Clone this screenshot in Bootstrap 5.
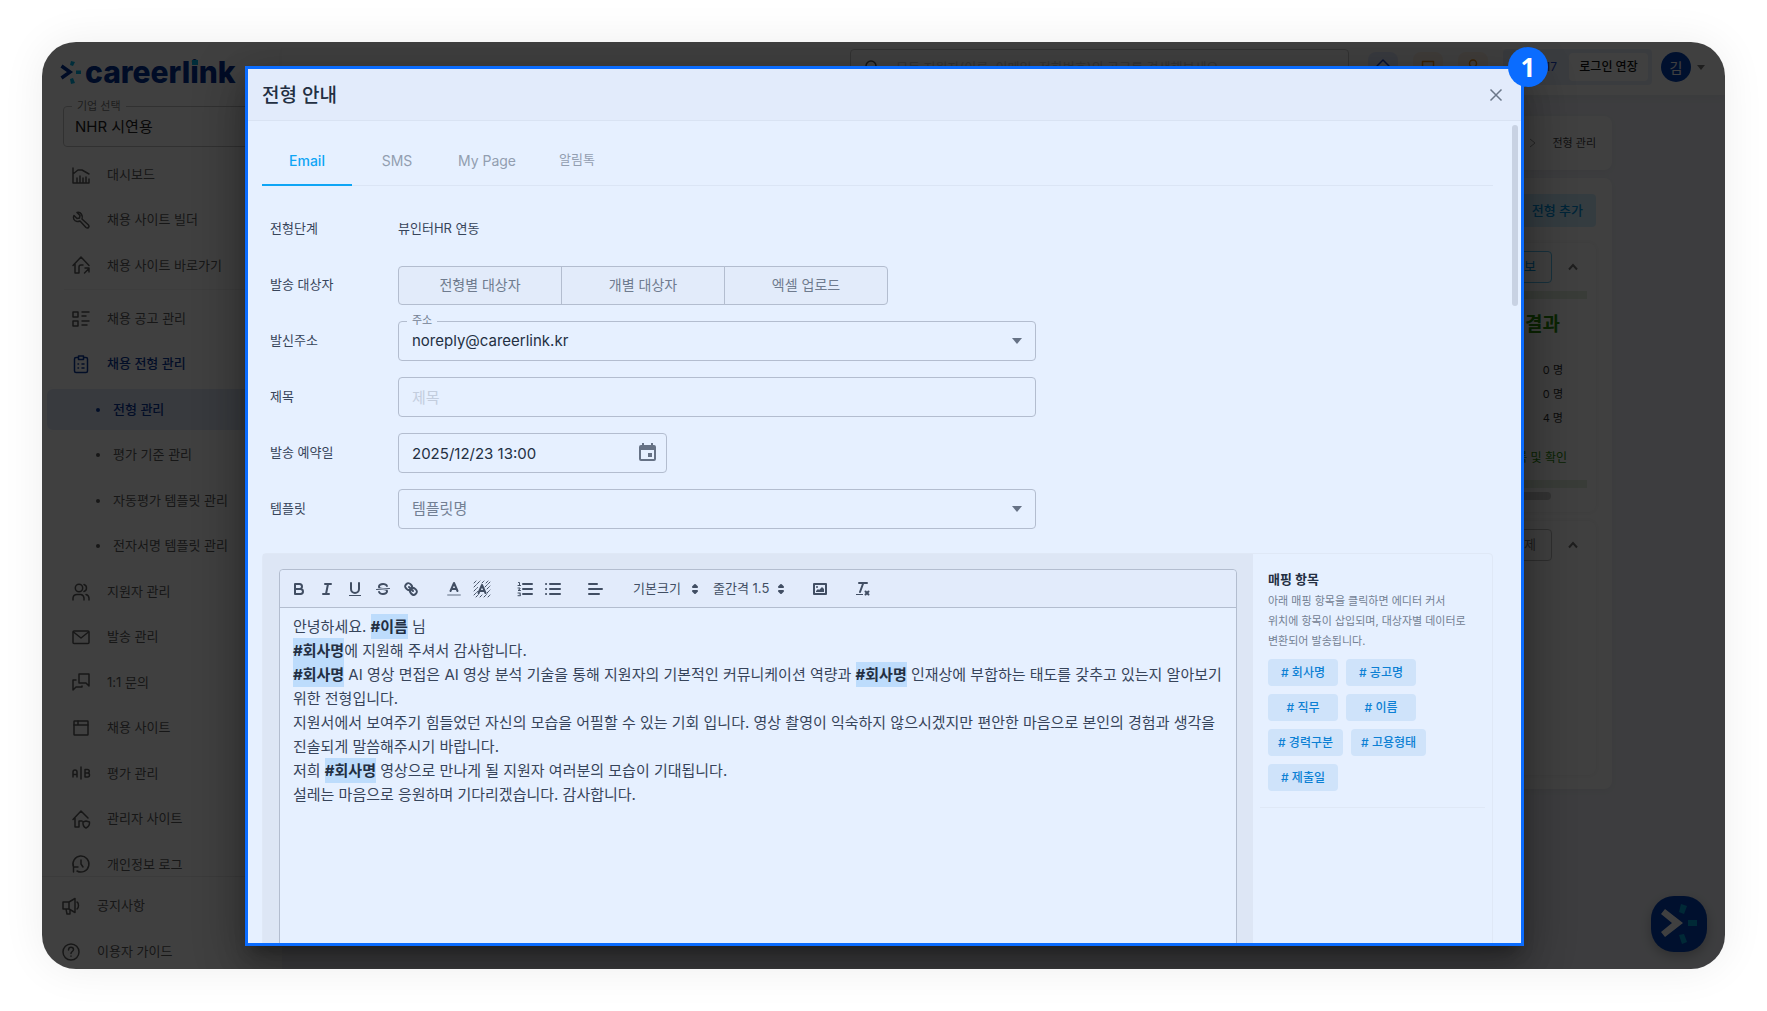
<!DOCTYPE html>
<html lang="ko">
<head>
<meta charset="utf-8">
<meta name="viewport" content="width=device-width, initial-scale=1">
<title>careerlink - 전형 안내</title>
<link rel="stylesheet" href="https://cdn.jsdelivr.net/npm/bootstrap@5.3.0/dist/css/bootstrap.min.css">
<style>
:root{--accent:#0a6cff;--sky:#0ea5f5;--panel:#e6f0ff;--panel-head:#e2ebfb;--edge:#b3bdcf;--ink:#37445a;--ink-dark:#232f42;--ink-soft:#7b8799}
body{font-family:Inter,"Noto Sans CJK KR",sans-serif;font-size:13px;color:var(--ink);background:#fff}
button,input,select{font-family:inherit}
svg{display:block;flex:none}
.page{height:100vh;padding:42px}
.stage{border-radius:34px;overflow:hidden;background:#fff;color:#5c5c5c}
.stage-shadow{border-radius:34px;box-shadow:0 0 44px rgba(0,0,0,.07)}
.ico{width:20px;height:20px;fill:none;stroke:currentColor;stroke-width:1.5;stroke-linecap:round;stroke-linejoin:round}

/* side navigation */
.side{width:240px;background:#fff}
.logo-row{height:58px;padding:2px 0 0 18px}
.wordmark{font-size:30px;font-weight:800;line-height:36px;color:#003296}
.idot{position:relative}
.idot::after{content:"";position:absolute;left:2px;top:6px;width:6px;height:5px;background:#00b4e6}
.company{margin:6px 0 0 21px;height:41px;border:1px solid #c4c4c4;border-radius:4px;padding:1px 11px 0;position:relative;color:#222}
.company select{border:0;background:transparent;width:100%;height:39px;appearance:none;color:#222;padding:0;font-size:15px}
.company label{position:absolute;left:8px;top:-9px;padding:0 5px;background:#fff;font-size:11px;line-height:16px;color:#777}
.side a{display:flex;align-items:center;color:inherit;text-decoration:none;white-space:nowrap}
.top-links{margin-top:5px;height:136px;padding-left:29px}
.mid-links{margin:6px 0 -11px;min-height:0}
.top-links a,.mid-links a{flex:1 1 0}
.mid-links a{padding-left:29px}
.top-links a,.mid-links a{gap:16px}
.mid-links a.sub-link{margin-left:5px;padding-left:49px;gap:13px}
.sub-link::before{content:"";width:4px;height:4px;border-radius:50%;background:currentColor}
.mid-links a.is-active{color:#0b3a9c;font-weight:500}
.mid-links a.is-current{background:#dfe6f8;border-radius:6px 0 0 6px;box-shadow:inset 0 2px #fff,inset 0 -2px #fff}
.foot-links{border-top:1px solid #ececec;padding:6px 0 0 19px;height:93px;position:relative}
.foot-links a{height:46px;gap:16px}
.thin{border-top:1px solid #f2f2f2;margin:1px 0 0 22px}

/* top bar */
.topbar{height:53px;background:#fff;padding:0 20px 3px 0;gap:15px;box-shadow:0 4px 10px rgba(0,0,0,.04);position:relative}
.search{width:499px;height:36px;border:1px solid #ccc;border-radius:4px;gap:15px;padding:0 10px;color:#555}
.search input{border:0;background:transparent;flex:1;font-size:13px;padding:2px 0 0}
.search input::placeholder{color:#ccc}
.tile{width:30px;height:30px;border:0;border-radius:8px;display:flex;align-items:center;justify-content:center;padding:0}
.tile-blue{background:#e4ebff;color:#1d46c8}
.tile-amber{background:#fff2e6;color:#e98a10}
.timer{background:#e8edfb;border-radius:4px;height:36px;padding:0 4px;width:149px;gap:12px;color:#1d46c8;font-size:12px}
.timer button{background:#fff;border:0;border-radius:4px;height:28px;width:79px;font-size:12px;font-weight:500;color:#111;padding:0}
.avatar{width:30px;height:30px;border-radius:50%;background:#0042b8;color:#fff;border:0;padding:0;font-size:14px}
.user{gap:6px;margin-left:-6px}

/* page behind */
.content{background:#f2f4fa;padding:21px 113px 0 12px;color:#444}
.sheet{background:#fff;border-radius:8px;box-shadow:0 2px 8px rgba(0,0,0,.05)}
.crumbs{height:54px;font-size:11px;gap:15px;padding:0 16px 0 0;margin-bottom:8px}
.board{height:611px;padding:16px 16px 14px}
.board .add{height:33px;border:0;border-radius:4px;background:#cfeeff;color:#0093e0;font-size:13px;font-weight:500;padding:0 13px}
.step{border-radius:8px;box-shadow:0 0 6px rgba(0,0,0,.08);padding:8px 9px}
.step-a{height:269px;margin-top:16px}
.step-b{height:254px;margin-top:9px}
.mini{height:32px;border:1px solid #5cc3f2;border-radius:4px;background:#fff;color:#0093e0;padding:0 15px;font-size:13px}
.mini-gray{border-color:#bbb;color:#777}
.step-tools{gap:11px;margin-right:8px;color:#777}
.band{height:8px;background:#e2efdd}
.result{color:#2f8f0c;font-size:19px;font-weight:700;line-height:24px;margin:14px 27px 0 0}
.counts{font-size:11px;line-height:24px;margin:21px 24px 0 0;color:#333}
.bulk{color:#2f8f0c;font-size:12px;line-height:20px;margin:18px 20px 12px 0}
.hbar{height:8px;border-radius:4px;background:#ccc;margin:4px 36px 0 0}

.veil{position:absolute;inset:0;background:rgba(0,0,0,.75);padding:24px 201px 23px 203px;z-index:5}
.fab{position:absolute;right:18px;bottom:17px;width:56px;height:56px;border:0;border-radius:23px;background:#0040b8;padding:0;box-shadow:0 4px 12px rgba(0,0,0,.25)}

/* dialog */
.dialog{position:relative;flex:1;min-width:0;border:3px solid var(--accent);background:var(--panel);color:var(--ink);box-shadow:0 11px 15px -7px rgba(0,0,0,.3),0 24px 38px 3px rgba(0,0,0,.2),0 9px 46px 8px rgba(0,0,0,.16)}
.dialog-head{height:52px;flex:none;background:var(--panel-head);border-bottom:1px solid #d9e3f3;padding:0 18px 0 14px}
.dialog-head h1{font-size:19px;font-weight:500;color:var(--ink-dark);margin:0;padding-top:4px}
.x-btn{border:0;background:none;padding:0;color:#6b7789}
.step-no{position:absolute;right:-27px;top:-22px;width:40px;height:40px;border-radius:50%;background:var(--accent);color:#fff;font:700 26px/40px "Noto Sans",sans-serif;text-align:center;z-index:9}
.dialog-body{position:relative;flex:1;min-height:0;overflow:hidden;padding:16px 28px 0 14px}
.thumb{position:absolute;right:3px;top:4px;width:6px;height:181px;border-radius:3px;background:#c8d2e3}
.tabs{border-bottom:1px solid #dbe5f5}
.tabs button{width:90px;height:49px;margin-bottom:-1px;border:0;border-bottom:2px solid transparent;background:none;font-size:14px;color:#929eb0;padding:0 0 1px}
.tabs button.on{color:var(--sky);border-color:var(--sky);font-weight:500}
.tabs button:lang(ko){font-size:13px}
.rows{padding:23px 8px 0;gap:16px}
.line{height:40px}
.line>label,.line>.cap{width:128px;flex:none}
.trio button{width:164px;height:39px;border:1px solid var(--edge);background:#e2ebfa;color:#6f7b8e;font-size:14px;margin-left:-1px;padding:0 0 2px}
.trio button:first-child{border-radius:4px 0 0 4px;margin-left:0}
.trio button:last-child{border-radius:0 4px 4px 0}
.box{position:relative;height:40px;flex:0 1 638px}
.box.short{flex-basis:269px}
.box select,.box input{width:100%;height:40px;border:1px solid var(--edge);border-radius:4px;background:transparent;padding:0 13px;font-size:15px;color:var(--ink-dark);appearance:none}
.box select.dim{color:#738093}
.box input::placeholder{color:#c3cddd}
.box .tag{position:absolute;left:9px;top:-9px;padding:0 5px;background:var(--panel);font-size:11px;line-height:16px;color:#738093}
.box svg{position:absolute;right:14px;top:17px;fill:#667285;pointer-events:none}
.box svg.cal{right:11px;top:10px}

.compose{margin-top:24px;border:1px solid #dfe8f6;border-radius:4px 4px 0 0;height:700px}
.editor-wrap{background:#dde6f5;flex:1;min-width:0;padding:15px 16px 0 16px}
.editor{border:1px solid var(--edge);border-radius:4px 4px 0 0;background:var(--panel);height:640px}
.tools{height:38px;background:var(--panel-head);border-bottom:1px solid var(--edge);border-radius:4px 4px 0 0;padding:0 5px;gap:15px}
.tools button{width:28px;height:24px;padding:3px 5px;border:0;background:none;color:#414e63}
.tools svg{width:18px;height:18px;fill:none;stroke:#414e63;stroke-width:2;stroke-linecap:round;stroke-linejoin:round}
.tools .f{fill:#414e63;stroke:none}
.tools .t{stroke-width:1}
.pick{position:relative}
.pick select{appearance:none;border:0;background:none;width:80px;height:24px;padding:0 0 0 8px;font-size:13px;color:#414e63}
.pick.wide select{width:86px}
.pick svg{position:absolute;right:1px;top:3px;pointer-events:none}
.letter{padding:7px 8px 7px 13px;font-size:15px;line-height:24px;color:#37445a}
.letter p{margin:0}
.letter b{background:#bddcfc;color:#232f42;padding:3px 0}
.mapping{width:239px;flex:none;padding:14px 7px}
.mapping .inner{padding:0 8px 16px;border-bottom:1px solid #dfe8f6}
.mapping h2{font-size:13px;font-weight:700;line-height:23px;color:var(--ink-dark);margin:0}
.mapping p{font-size:11px;line-height:20px;color:#738093;margin:0 0 8px;white-space:nowrap}
.chips{gap:8px}
.chips button{height:27px;min-width:70px;border:0;border-radius:4px;background:#cfe3fa;color:#0c80d4;font-size:12px;font-weight:500;padding:0 10px}
</style>
</head>
<body>
<svg width="0" height="0" class="position-absolute" aria-hidden="true">
  <symbol id="drop" viewBox="0 0 10 6"><path d="M0 0h10L5 6z"/></symbol>
  <symbol id="up" viewBox="0 0 12 8"><path d="M2 6.500 6 2l4 4.500" fill="none" stroke="currentColor" stroke-width="2"/></symbol>
  <symbol id="sort" viewBox="0 0 18 18"><path d="M7 11l2 2 2-2zM7 7l2-2 2 2z" fill="#414e63"/></symbol>
</svg>
<div class="page">
<div class="stage-shadow h-100">
<div class="stage h-100 position-relative">
  <div class="d-flex h-100">
    <nav class="side d-flex flex-column flex-shrink-0" aria-label="주 메뉴">
      <div class="logo-row d-flex align-items-center">
        <svg width="21" height="24" viewBox="0 0 21 24"><path d="M1.500 6 10 12 1.500 18" fill="none" stroke="#003296" stroke-width="3.500"/><path d="m11 1 4 1-2 4-3-1zM16 10.500h5V14h-5zM10 19l3-1 2 5-4 1z" fill="#00b4e6"/></svg>
        <span class="wordmark ms-1">careerl<span class="idot">i</span>nk</span>
      </div>
      <div class="company"><label for="corp">기업 선택</label><select id="corp"><option>NHR 시연용</option></select></div>
      <div class="top-links d-flex flex-column">
        <a href="#"><svg class="ico" viewBox="0 0 20 20"><path d="M2 3v15h16M2 9l5-4h4l7 4M6 18v-5M9 18v-7M12 18v-5M15 18v-6M18 18v-4"/></svg>대시보드</a>
        <a href="#"><svg class="ico" viewBox="0 0 20 20"><path d="M6 2.500 9 5.500 8.500 8 6 8.500 3 5.500C1.500 8 3 11 6 11.500c1.500.2 2 0 3-.5l6 6.500c2 1.500 4-1 2.500-2.500L11 9c1.200-3-1-7.500-5-6.500z"/></svg>채용 사이트 빌더</a>
        <a href="#"><svg class="ico" viewBox="0 0 20 20"><path d="M2 10.500 10 2l8 8.500M4 9v9h4v-6c0-1 1-2 2-2h2M13.500 18l4.500-4.500M14 13h4v4"/></svg>채용 사이트 바로가기</a>
      </div>
      <div class="thin"></div>
      <div class="mid-links d-flex flex-column flex-grow-1">
        <a href="#"><svg class="ico" viewBox="0 0 20 20"><path d="M2 3h5v5H2zM2 12h5v5H2zM11 3h7M11 7h4M11 12h7M11 16h5"/></svg>채용 공고 관리</a>
        <a href="#" class="is-active"><svg class="ico" viewBox="0 0 20 20"><path d="M7 3.500H5a1.500 1.500 0 0 0-1.500 1.500v12A1.500 1.500 0 0 0 5 18.500h10a1.500 1.500 0 0 0 1.500-1.500V5A1.500 1.500 0 0 0 15 3.500h-2M7.500 2h5v3.500h-5zM7 10h.5M7 14h.5M11 10h2M11 14h2"/></svg>채용 전형 관리</a>
        <a href="#" class="sub-link is-active is-current">전형 관리</a>
        <a href="#" class="sub-link">평가 기준 관리</a>
        <a href="#" class="sub-link">자동평가 템플릿 관리</a>
        <a href="#" class="sub-link">전자서명 템플릿 관리</a>
        <a href="#"><svg class="ico" viewBox="0 0 20 20"><circle cx="8" cy="6" r="3.700"/><path d="M13 2.500a3.700 3.700 0 0 1 0 7M2 18v-2a4 4 0 0 1 4-3.500h4a4 4 0 0 1 3 3.500v2M15 12.500a4 4 0 0 1 3 3.500v2"/></svg>지원자 관리</a>
        <a href="#"><svg class="ico" viewBox="0 0 20 20"><rect x="2" y="4" width="16" height="12.500" rx="1"/><path d="m2.500 5 7.500 6 7.500-6"/></svg>발송 관리</a>
        <a href="#"><svg class="ico" viewBox="0 0 20 20"><path d="M8 2h10v12l-3-3H8zM5 8H2v10l3-3h6v-1"/></svg>1:1 문의</a>
        <a href="#"><svg class="ico" viewBox="0 0 20 20"><rect x="3" y="3" width="14" height="14" rx=".5"/><path d="M3 7h14M7 3v4"/></svg>채용 사이트</a>
        <a href="#"><svg class="ico" viewBox="0 0 20 20"><path d="M2 14V9a2 2 0 0 1 4 0v5M2 11.500h4M10 4v12M14 6.500h2.500a1.700 1.700 0 0 1 0 3.500H14zM14 10h2.500a1.900 1.900 0 0 1 0 4H14z"/></svg>평가 관리</a>
        <a href="#"><svg class="ico" viewBox="0 0 20 20"><path d="M2 10.500 10 2l7 7M4 9v9h4v-6h3M12 13l3-1 3.500 1c.3 3-1.200 5-3.500 6-2.300-1-3.300-3-3-6z"/></svg>관리자 사이트</a>
        <a href="#"><svg class="ico" viewBox="0 0 20 20"><path d="M2.500 13A8 8 0 1 1 6 17M2.500 18v-5H7M10 6v4l2 3"/></svg>개인정보 로그</a>
      </div>
      <div class="foot-links">
        <a href="#"><svg class="ico" viewBox="0 0 20 20"><path d="M2 6h6l6-3.500v14L8 13H2zM8 6v7M5 13l1 5h3v-4M16 6c2 1 2 6 0 7"/></svg>공지사항</a>
        <a href="#"><svg class="ico" viewBox="0 0 20 20"><circle cx="10" cy="10" r="8"/><path d="M7.500 8c.3-4 5-3 5-.5C12.500 9.500 10 9.500 10 11.500M10 14v.3"/></svg>이용자 가이드</a>
      </div>
    </nav>

    <div class="d-flex flex-column flex-grow-1">
      <header class="topbar d-flex align-items-center justify-content-end">
        <div class="search d-flex align-items-center"><svg class="ico" viewBox="0 0 20 20"><circle cx="10" cy="9" r="5"/><path d="m14 13 4 4"/></svg><input type="search" aria-label="검색" placeholder="모든 지원자(이름, 이메일, 전화번호)의 공고를 검색해보세요"></div>
        <button class="tile tile-blue ms-1" aria-label="홈"><svg class="ico" viewBox="0 0 20 20"><path d="M4 17V9l6-6 6 6v8z"/></svg></button>
        <button class="tile tile-amber" aria-label="메시지"><svg class="ico" viewBox="0 0 20 20"><path d="M4.500 4.500h11v11h-11z"/></svg></button>
        <button class="tile tile-amber" aria-label="사용자"><svg class="ico" viewBox="0 0 20 20"><circle cx="10" cy="6.500" r="3.500"/><path d="M4 18c0-8 12-8 12 0"/></svg></button>
        <div class="timer d-flex align-items-center justify-content-end"><span>59:17</span><button>로그인 연장</button></div>
        <div class="user d-flex align-items-center"><button class="avatar">김</button><svg width="8" height="5" fill="#777"><use href="#drop"/></svg></div>
      </header>
      <main class="content flex-grow-1">
        <div class="sheet crumbs d-flex align-items-center justify-content-end"><svg width="8" height="10" fill="none" stroke="#999"><path d="m1 1 5 4-5 4"/></svg><span>전형 관리</span></div>
        <div class="sheet board">
          <div class="d-flex justify-content-end"><button class="add">전형 추가</button></div>
          <section class="step step-a">
            <div class="step-tools d-flex justify-content-end align-items-center"><button class="mini me-1">정보</button><svg width="12" height="8"><use href="#up"/></svg></div>
            <div class="band mt-2"></div>
            <div class="result text-end">결과</div>
            <div class="counts text-end"><div>0 명</div><div>0 명</div><div>4 명</div></div>
            <div class="bulk text-end">등록 및 확인</div>
            <div class="band"></div>
            <div class="hbar"></div>
          </section>
          <section class="step step-b">
            <div class="step-tools d-flex justify-content-end align-items-center"><button class="mini mini-gray me-1">삭제</button><svg width="12" height="8"><use href="#up"/></svg></div>
          </section>
        </div>
      </main>
    </div>
  </div>
  <button class="fab" aria-label="상담"><svg width="56" height="56" viewBox="0 0 56 56"><path d="m10 18 4-5 18 14-18 14-4-5 11-9z" fill="#fff"/><path d="m30 8 6 2-3 8-5-2zM37 24h9v6h-9zM28 39l5-1 3 8-5 2z" fill="#00a5d6"/></svg></button>

  <div class="veil d-flex">
    <div class="dialog d-flex flex-column" role="dialog" aria-labelledby="dlg">
      <span class="step-no">1</span>
      <header class="dialog-head d-flex align-items-center justify-content-between">
        <h1 id="dlg">전형 안내</h1>
        <button class="x-btn" aria-label="닫기"><svg width="14" height="14" fill="none" stroke="currentColor" stroke-width="1.500"><path d="m1.500 1.500 11 11M12.500 1.500l-11 11"/></svg></button>
      </header>
      <div class="dialog-body">
        <div class="thumb"></div>
        <div class="tabs d-flex" role="tablist">
          <button class="on" role="tab" lang="en">Email</button><button role="tab" lang="en">SMS</button><button role="tab" lang="en">My Page</button><button role="tab">알림톡</button>
        </div>
        <form class="rows d-flex flex-column">
          <div class="line d-flex align-items-center"><span class="cap">전형단계</span><span>뷰인터HR 연동</span></div>
          <div class="line d-flex align-items-center"><span class="cap">발송 대상자</span><div class="trio d-flex"><button type="button">전형별 대상자</button><button type="button">개별 대상자</button><button type="button">엑셀 업로드</button></div></div>
          <div class="line d-flex align-items-center"><label for="from">발신주소</label><div class="box"><span class="tag">주소</span><select id="from"><option>noreply@careerlink.kr</option></select><svg width="10" height="6"><use href="#drop"/></svg></div></div>
          <div class="line d-flex align-items-center"><label for="subj">제목</label><div class="box"><input id="subj" type="text" placeholder="제목"></div></div>
          <div class="line d-flex align-items-center"><label for="when">발송 예약일</label><div class="box short"><input id="when" type="text" value="2025/12/23 13:00"><svg class="cal" width="17" height="18" viewBox="0 0 17 18"><path fill-rule="evenodd" d="M3 0h2v2h7V0h2v2h1a2 2 0 0 1 2 2v12a2 2 0 0 1-2 2H2a2 2 0 0 1-2-2V4a2 2 0 0 1 2-2h1zM2 7v9h13V7zM9 10h4v4H9z"/></svg></div></div>
          <div class="line d-flex align-items-center"><label for="tpl">템플릿</label><div class="box"><select id="tpl" class="dim"><option>템플릿명</option></select><svg width="10" height="6"><use href="#drop"/></svg></div></div>
        </form>
        <div class="compose d-flex">
          <div class="editor-wrap">
            <div class="editor">
              <div class="tools d-flex align-items-center">
                <div class="d-flex">
                  <button aria-label="굵게"><svg viewBox="0 0 18 18"><path d="M5 4h4.500a2.500 2.500 0 0 1 0 5H5zM5 9h5.500a2.500 2.500 0 0 1 0 5H5z"/></svg></button>
                  <button aria-label="기울임"><svg viewBox="0 0 18 18"><path d="M7 4h6M5 14h6M8 14l2-10"/></svg></button>
                  <button aria-label="밑줄"><svg viewBox="0 0 18 18"><path d="M5 3v6a4 4 0 0 0 8 0V3"/><rect class="f" x="3" y="15" width="12" height="1"/></svg></button>
                  <button aria-label="취소선"><svg viewBox="0 0 18 18"><path class="t" d="M2.500 9.500l13-1"/><path class="f" d="M9.007,8C6.542,7.791,6,7.519,6,6.500,6,5.792,7.283,5,9,5c1.571,0,2.765.679,2.969,1.309a1,1,0,0,0,1.900-.617C13.356,4.106,11.354,3,9,3,6.200,3,4,4.538,4,6.500a3.200,3.200,0,0,0,.5,1.843ZM8.984,10C11.457,10.208,12,10.479,12,11.500c0,0.708-1.283,1.500-3,1.500-1.571,0-2.765-.679-2.969-1.309a1,1,0,1,0-1.900.617C4.644,13.894,6.646,15,9,15c2.800,0,5-1.538,5-3.500a3.200,3.200,0,0,0-.5-1.843Z"/></svg></button>
                  <button aria-label="링크"><svg viewBox="0 0 18 18"><path d="M7 7l4 4M8.900,4.577a3.476,3.476,0,0,1,.36,4.679A3.476,3.476,0,0,1,4.577,8.900C3.185,7.500,2.035,6.400,4.217,4.217S7.500,3.185,8.900,4.577ZM13.423,9.100a3.476,3.476,0,0,0-4.679-.36,3.476,3.476,0,0,0,.36,4.679c1.392,1.392,2.500,2.542,4.679.36S14.815,10.500,13.423,9.100Z"/></svg></button>
                </div>
                <div class="d-flex">
                  <button aria-label="글자색"><svg viewBox="0 0 18 18"><path d="M3 15h12" opacity=".4"/><path d="M5.500 11 9 3l3.500 8M6.400 9h5.200"/></svg></button>
                  <button aria-label="배경색"><svg viewBox="0 0 18 18"><path class="t" stroke-dasharray="1 1" d="M1 3l2-2M1 7l6-6M1 11l4-4M1 15l4-4M3 17l3-3M7 17l2-2M11 17l3-3M15 17l2-2M13 3l2-2M9 3l2-2M12 7l5-5M14 9l3-3M14 13l3-3"/><path d="M5.500 13 9 5l3.500 8M6.400 11h5.200"/></svg></button>
                </div>
                <div class="d-flex">
                  <button aria-label="번호 목록"><svg viewBox="0 0 18 18"><path d="M7 4h9M7 9h9M7 14h9"/><path class="t" d="M2.500 2.500h1v3M2 5.500h2.500M2 8h2v1l-2 1.500h2.500M2 13h2.500l-1 1.200 1 .3v1.200H2"/></svg></button>
                  <button aria-label="글머리 목록"><svg viewBox="0 0 18 18"><path d="M6 4h10M6 9h10M6 14h10M2 4h.1M2 9h.1M2 14h.1"/></svg></button>
                </div>
                <div class="d-flex"><button aria-label="정렬"><svg viewBox="0 0 18 18"><path d="M2 4h8M2 9h13M2 14h10"/></svg></button></div>
                <div class="d-flex">
                  <div class="pick"><select aria-label="글자 크기"><option>기본크기</option></select><svg><use href="#sort"/></svg></div>
                  <div class="pick wide"><select aria-label="줄간격"><option>줄간격 1.5</option></select><svg><use href="#sort"/></svg></div>
                </div>
                <button aria-label="이미지"><svg viewBox="0 0 18 18"><rect x="3" y="4" width="12" height="10"/><circle class="f" cx="6" cy="7" r="1"/><path class="f" d="M5 12v-1l2-2 1 1 3-3 2 2v3z"/></svg></button>
                <button aria-label="서식 지우기"><svg viewBox="0 0 18 18"><path d="M5 3h8M6 12 9.300 3M11.500 11.500l3 3M14.500 11.500l-3 3"/><rect class="f" x="2" y="14" width="7" height="1"/></svg></button>
              </div>
              <div class="letter" contenteditable="true" role="textbox" aria-label="본문" spellcheck="false">
                <p>안녕하세요. <b>#이름</b> 님</p>
                <p><b>#회사명</b>에 지원해 주셔서 감사합니다.</p>
                <p><b>#회사명</b> AI 영상 면접은 AI 영상 분석 기술을 통해 지원자의 기본적인 커뮤니케이션 역량과 <b>#회사명</b> 인재상에 부합하는 태도를 갖추고 있는지 알아보기 위한 전형입니다.</p>
                <p>지원서에서 보여주기 힘들었던 자신의 모습을 어필할 수 있는 기회 입니다. 영상 촬영이 익숙하지 않으시겠지만 편안한 마음으로 본인의 경험과 생각을 진솔되게 말씀해주시기 바랍니다.</p>
                <p>저희 <b>#회사명</b> 영상으로 만나게 될 지원자 여러분의 모습이 기대됩니다.</p>
                <p>설레는 마음으로 응원하며 기다리겠습니다. 감사합니다.</p>
              </div>
            </div>
          </div>
          <aside class="mapping">
            <div class="inner">
              <h2>매핑 항목</h2>
              <p>아래 매핑 항목을 클릭하면 에디터 커서<br>위치에 항목이 삽입되며, 대상자별 데이터로<br>변환되어 발송됩니다.</p>
              <div class="chips d-flex flex-wrap">
                <button># 회사명</button><button># 공고명</button><button># 직무</button><button># 이름</button><button># 경력구분</button><button># 고용형태</button><button># 제출일</button>
              </div>
            </div>
          </aside>
        </div>
      </div>
    </div>
  </div>
</div>
</div>
</div>
<script src="https://cdn.jsdelivr.net/npm/bootstrap@5.3.0/dist/js/bootstrap.bundle.min.js"></script>
</body>
</html>
